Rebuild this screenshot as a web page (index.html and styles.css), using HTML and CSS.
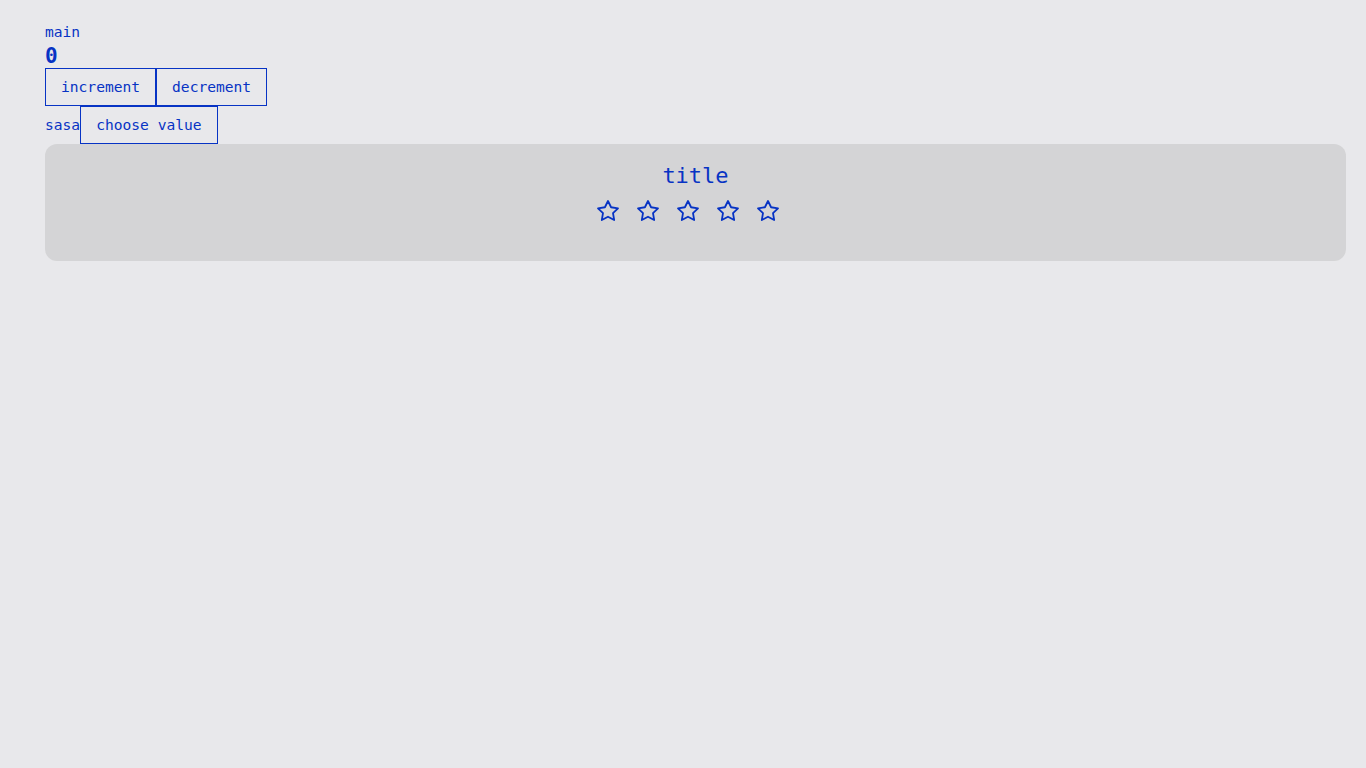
FILE: index.html
```html
<!DOCTYPE html>
<html>
<head>
<meta charset="utf-8">
<link rel="stylesheet" href="styles.css">
</head>
<body>
<div class="app">
  <div class="label">main</div>
  <div class="count">0</div>
  <div class="row">
    <button class="btn">increment</button><button class="btn">decrement</button>
  </div>
  <div class="row">
    <span class="label">sasa</span><button class="btn">choose value</button>
  </div>
  <div class="panel">
    <div class="title">title</div>
    <div class="stars">
      <svg class="star" viewBox="0 0 24 24"><path d="M12 2l3.09 6.26L22 9.27l-5 4.87 1.18 6.88L12 17.77l-6.18 3.25L7 14.14 2 9.27l6.91-1.01L12 2z"/></svg>
      <svg class="star" viewBox="0 0 24 24"><path d="M12 2l3.09 6.26L22 9.27l-5 4.87 1.18 6.88L12 17.77l-6.18 3.25L7 14.14 2 9.27l6.91-1.01L12 2z"/></svg>
      <svg class="star" viewBox="0 0 24 24"><path d="M12 2l3.09 6.26L22 9.27l-5 4.87 1.18 6.88L12 17.77l-6.18 3.25L7 14.14 2 9.27l6.91-1.01L12 2z"/></svg>
      <svg class="star" viewBox="0 0 24 24"><path d="M12 2l3.09 6.26L22 9.27l-5 4.87 1.18 6.88L12 17.77l-6.18 3.25L7 14.14 2 9.27l6.91-1.01L12 2z"/></svg>
      <svg class="star" viewBox="0 0 24 24"><path d="M12 2l3.09 6.26L22 9.27l-5 4.87 1.18 6.88L12 17.77l-6.18 3.25L7 14.14 2 9.27l6.91-1.01L12 2z"/></svg>
    </div>
  </div>
</div>
</body>
</html>
```
FILE: styles.css
```css
html, body {
  margin: 0;
  padding: 0;
  background: #e8e8eb;
}
body {
  font-family: "DejaVu Sans Mono", "Liberation Mono", monospace;
  font-size: 14.6px;
  color: #0733c4;
}
.app {
  padding: 23px 20px 0 45px;
}
.label {
  line-height: 18px;
}
.count {
  font-size: 21px;
  font-weight: bold;
  padding-top: 4px;
  line-height: 23px;
  height: 23px;
}
.row {
  display: flex;
  align-items: center;
}
.btn {
  font-family: inherit;
  font-size: 14.6px;
  color: inherit;
  background: transparent;
  border: 1px solid #0733c4;
  border-radius: 0;
  padding: 0 15px 1px;
  height: 38px;
  margin: 0;
  cursor: pointer;
}
.panel {
  background: #d4d4d6;
  border-radius: 12px;
  padding: 17px 0 0;
  box-sizing: border-box;
  height: 117px;
  text-align: center;
}
.title {
  font-size: 22px;
  line-height: 30px;
}
.stars {
  display: flex;
  justify-content: center;
  margin-top: 8px;
}
.star {
  width: 24px;
  height: 24px;
  margin-right: 16px;
  fill: none;
  stroke: #0733c4;
  stroke-width: 1.8;
  stroke-linejoin: round;
}
```
